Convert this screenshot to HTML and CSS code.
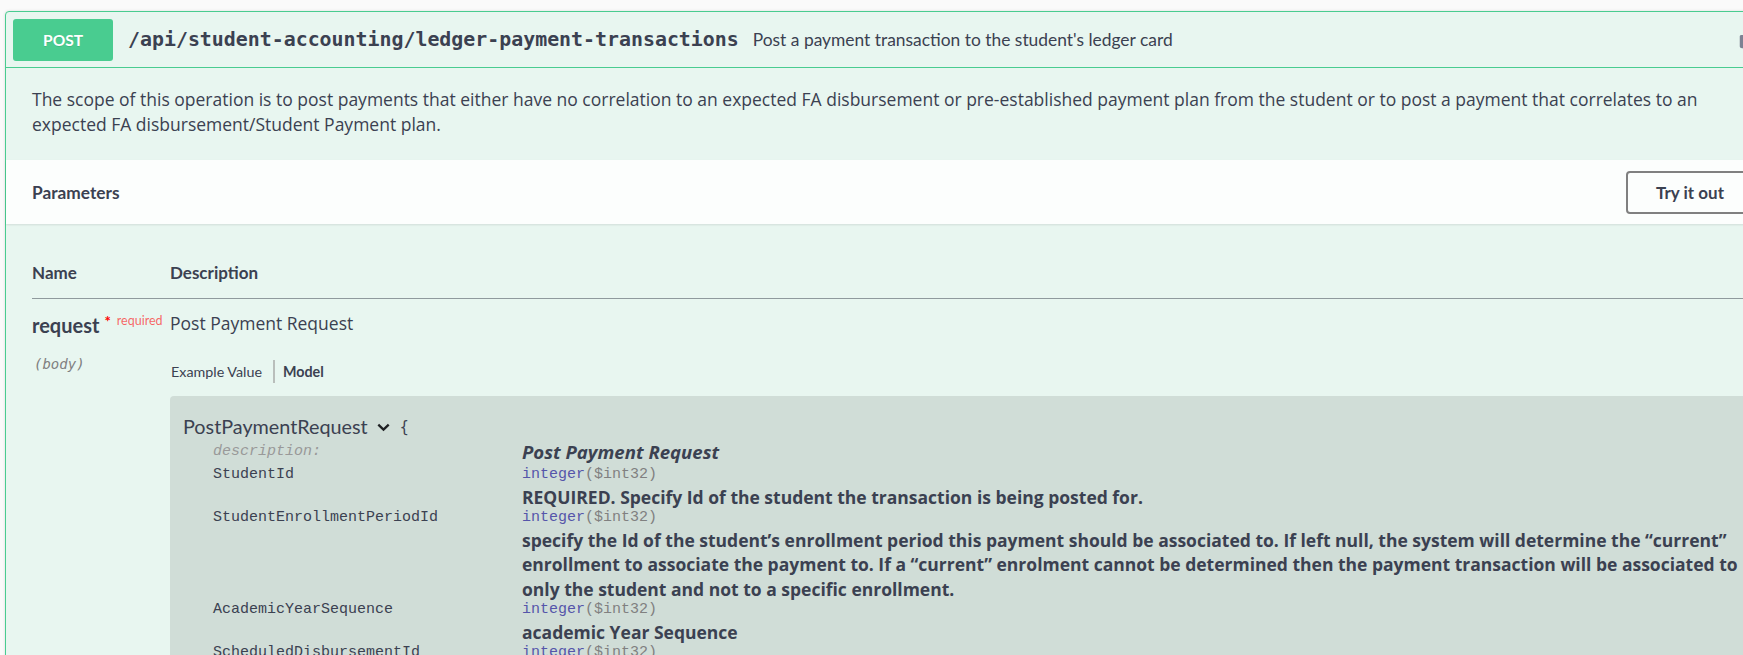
FILE: index.html
```html
<!DOCTYPE html>
<html lang="en">
<head>
<meta charset="utf-8">
<title>POST /api/student-accounting/ledger-payment-transactions</title>
<link rel="stylesheet" href="styles.css">
</head>
<body>
<div class="page">
  <div class="opblock">
    <div class="summary">
      <span class="method">POST</span>
      <span class="path">/api/student-accounting/ledger-payment-transactions</span>
      <span class="summary-desc">Post a payment transaction to the student's ledger card</span>
      <span class="lock">
        <svg width="25" height="25" viewBox="0 0 20 20"><path fill="#7d8293" d="M15.8 8H14V5.6C14 2.703 12.665 1 10 1 7.334 1 6 2.703 6 5.6V6h2v-.801C8 3.754 8.797 3 10 3c1.203 0 2 .754 2 2.199V8H4c-.553 0-1 .646-1 1.199V17c0 .549.428 1.139.951 1.307l1.197.387C5.672 18.861 6.55 19 7.1 19h5.8c.549 0 1.428-.139 1.951-.307l1.196-.387c.524-.167.953-.757.953-1.306V9.199C17 8.646 16.352 8 15.8 8z"/></svg>
      </span>
    </div>
    <div class="op-body">
      <div class="description">
        <p>The scope of this operation is to post payments that either have no correlation to an expected FA disbursement or pre-established payment plan from the student or to post a payment that correlates to an<br>expected FA disbursement/Student Payment plan.</p>
      </div>
      <div class="section-header">
        <h4 class="section-title">Parameters</h4>
        <button class="try-out">Try it out</button>
      </div>
      <div class="params">
        <table class="param-table">
          <thead>
            <tr>
              <th class="col-name">Name</th>
              <th class="col-desc">Description</th>
            </tr>
          </thead>
          <tbody>
            <tr>
              <td class="col-name">
                <div class="pname">request<span class="star">*</span><span class="req">required</span></div>
                <div class="pin">(body)</div>
              </td>
              <td class="col-desc">
                <div class="pdesc">Post Payment Request</div>
                <ul class="tabs">
                  <li class="tab">Example Value</li>
                  <li class="tab active">Model</li>
                </ul>
                <div class="model-box">
                  <div class="model-title">
                    <span class="model-name">PostPaymentRequest</span>
                    <svg class="chevron" width="13" height="9" viewBox="0 0 13 9"><path d="M1.3 1.6 6.5 6.6l5.2-5" fill="none" stroke="#1f2124" stroke-width="2.3"/></svg>
                    <span class="brace">{</span>
                  </div>
                  <table class="model-table">
                    <tr class="row-desc">
                      <td class="prop-name italic">description:</td>
                      <td class="prop-val"><span class="model-desc">Post Payment Request</span></td>
                    </tr>
                    <tr>
                      <td class="prop-name">StudentId</td>
                      <td class="prop-val">
                        <div class="type"><span class="prop-type">integer</span><span class="prop-format">($int32)</span></div>
                        <div class="prop-desc">REQUIRED. Specify Id of the student the transaction is being posted for.</div>
                      </td>
                    </tr>
                    <tr>
                      <td class="prop-name">StudentEnrollmentPeriodId</td>
                      <td class="prop-val">
                        <div class="type"><span class="prop-type">integer</span><span class="prop-format">($int32)</span></div>
                        <div class="prop-desc">specify the Id of the student’s enrollment period this payment should be associated to. If left null, the system will determine the “current”<br>enrollment to associate the payment to. If a “current” enrolment cannot be determined then the payment transaction will be associated to<br>only the student and not to a specific enrollment.</div>
                      </td>
                    </tr>
                    <tr>
                      <td class="prop-name">AcademicYearSequence</td>
                      <td class="prop-val">
                        <div class="type"><span class="prop-type">integer</span><span class="prop-format">($int32)</span></div>
                        <div class="prop-desc">academic Year Sequence</div>
                      </td>
                    </tr>
                    <tr>
                      <td class="prop-name">ScheduledDisbursementId</td>
                      <td class="prop-val">
                        <div class="type"><span class="prop-type">integer</span><span class="prop-format">($int32)</span></div>
                        <div class="prop-desc">scheduled Disbursement Id</div>
                      </td>
                    </tr>
                  </table>
                </div>
              </td>
            </tr>
          </tbody>
        </table>
      </div>
    </div>
  </div>
</div>
</body>
</html>
```

FILE: styles.css
```css
* { box-sizing: border-box; }
html, body { margin: 0; padding: 0; }
body {
  background: #fafafa;
  overflow: hidden;
  font-family: "Open Sans", "Noto Sans", sans-serif;
  color: #3b4151;
}
.page { padding: 11px 0 0 5px; width: 1800px; }
.opblock {
  width: 1770px;
  border: 1px solid #49cc90;
  border-radius: 4px;
  background: #e8f6f0;
  box-shadow: 0 0 3px rgba(0,0,0,.12);
}
.summary {
  display: flex;
  align-items: center;
  height: 56px;
  padding: 0 13px 0 7px;
  border-bottom: 1px solid #49cc90;
}
.method {
  width: 100px;
  height: 42px;
  border-radius: 3px;
  background: #49cc90;
  color: #fff;
  font: 700 15.5px "Lato", sans-serif;
  display: flex;
  align-items: center;
  justify-content: center;
  text-shadow: 0 1px 0 rgba(0,0,0,.1);
}
.path {
  margin-left: 15px;
  font: 600 19.9px "DejaVu Sans Mono", monospace;
  color: #3b4151;
}
.summary-desc {
  margin-left: 14px;
  font: 17.4px "Lato", sans-serif;
  color: #3b4151;
}
.lock { margin-left: auto; margin-bottom: 4px; display: flex; }

.description { padding: 19px 26px 24px; }
.description p { margin: 0; font-size: 17.5px; line-height: 24.5px; }

.section-header {
  height: 64px;
  display: flex;
  align-items: center;
  justify-content: space-between;
  padding: 0 20px 0 26px;
  background: rgba(255,255,255,.85);
  box-shadow: 0 1px 2px rgba(0,0,0,.1);
}
.section-title { margin: 0; font: 700 17.3px "Lato", sans-serif; color: #3b4151; }
.try-out {
  height: 43px;
  width: 128px;
  padding: 0;
  border: 2px solid #808080;
  border-radius: 4px;
  background: transparent;
  font: 700 17px "Lato", sans-serif;
  color: #3b4151;
}

.params { padding: 37px 20px 0 26px; }
.param-table { width: 100%; border-collapse: collapse; }
.param-table th {
  text-align: left;
  font: 700 17px "Lato", sans-serif;
  line-height: 24px;
  padding: 0 0 13px;
  border-bottom: 1px solid rgba(59,65,81,.3);
  color: #3b4151;
}
.param-table td { vertical-align: top; padding: 0; }
.col-name { width: 138px; }
.pname { margin-top: 13px; font: 700 20px "Lato", sans-serif; line-height: 26px; white-space: nowrap; }
.star { color: red; font-size: 15px; position: relative; top: -6px; margin-left: 5px; }
.req { color: rgba(255,0,0,.6); font: 400 12.5px "Lato", sans-serif; position: relative; top: -8px; margin-left: 6px; }
.pin { margin-top: 14px; font: italic 14px "DejaVu Sans Mono", monospace; line-height: 20px; color: #808080; padding-left: 2px; }
.pdesc { margin-top: 12px; font-size: 17.5px; line-height: 24px; }
.tabs { list-style: none; margin: 25px 0 0; padding: 0 0 0 1px; display: flex; }
.tab { font: 14.3px "Lato", sans-serif; line-height: 23px; color: #3b4151; }
.tab:first-child { padding-right: 11px; border-right: 2px solid #b9bebb; }
.tab.active { font-weight: 700; padding-left: 8px; }

.model-box {
  margin-top: 13px;
  background: rgba(0,0,0,.1);
  border-radius: 4px;
  padding: 17px 13px 20px;
}
.model-title { display: flex; align-items: center; height: 26px; }
.model-name { font: 19.8px "Lato", sans-serif; color: #3b4151; }
.chevron { margin-left: 9px; margin-top: 2px; }
.brace { margin-left: 10px; font: 15px "DejaVu Sans Mono", monospace; color: #3b4151; margin-top: 2px; }
.model-table { margin-left: 30px; border-collapse: collapse; }
.model-table td { padding: 0; vertical-align: top; }
.prop-name {
  width: 309px;
  font: 15px "Liberation Mono", monospace;
  line-height: 18.5px;
  color: #3b4151;
}
.prop-name.italic { font-style: italic; color: #999; }
.row-desc td { line-height: 25px; }
.model-desc { font-weight: 700; font-style: italic; font-size: 18.6px; }
.type { font: 15px "Liberation Mono", monospace; line-height: 18.5px; }
.prop-type { color: #55a; }
.prop-format { color: #808080; }
.prop-desc { font-weight: 700; font-size: 17.5px; line-height: 24.5px; white-space: nowrap; }
```
